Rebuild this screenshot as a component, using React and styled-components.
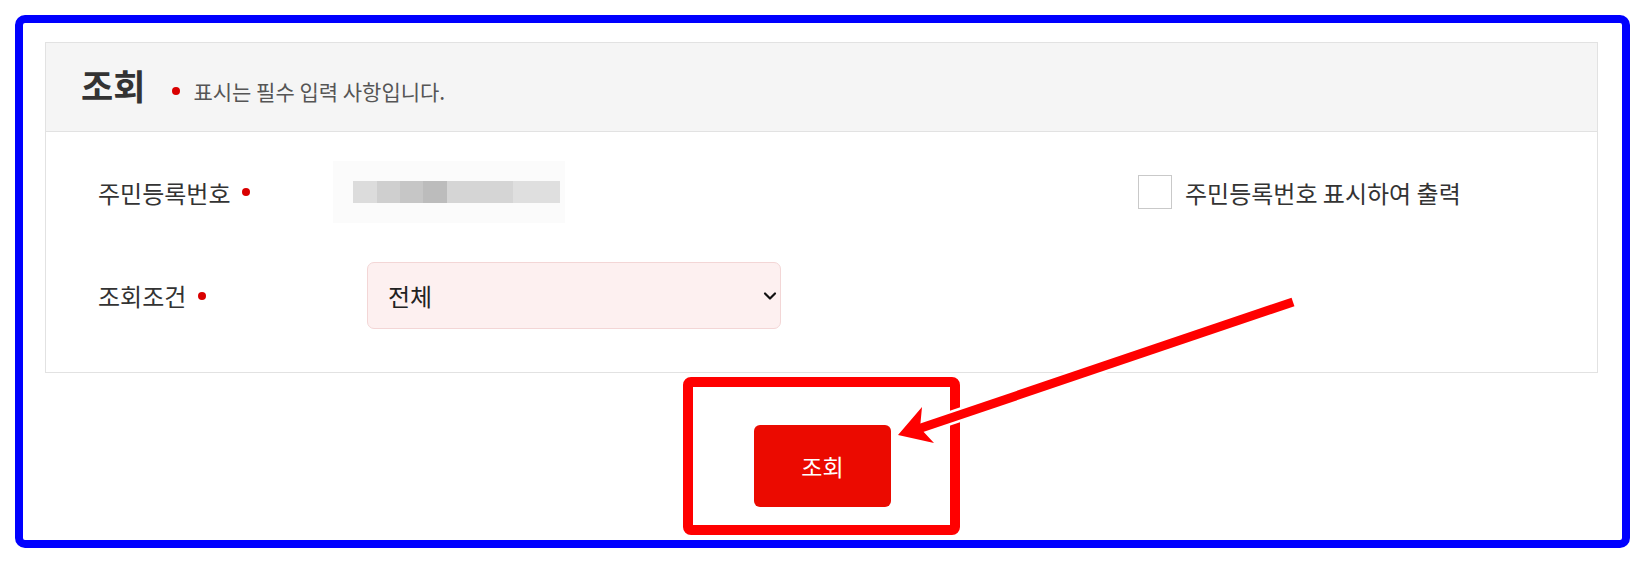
import React from "react";
import styled, { createGlobalStyle } from "styled-components";

const Global = createGlobalStyle`
  html, body { margin: 0; padding: 0; background: #ffffff; }
  body { font-family: "Noto Sans CJK KR", "Noto Sans", sans-serif; color: #333; }
  * { box-sizing: border-box; }
`;

const Page = styled.div`
  position: relative;
  width: 1645px;
  height: 564px;
  padding: 15px 0 0 15px;
  overflow: hidden;
`;

const Frame = styled.div`
  width: 1615px;
  height: 533px;
  border: 8px solid #0000ff;
  border-radius: 10px;
  padding: 19px 24px 0 22px;
  display: flex;
  flex-direction: column;
  align-items: stretch;
`;

const Panel = styled.section`
  border: 1px solid #e2e2e2;
  background: #ffffff;
`;

const Header = styled.header`
  height: 89px;
  background: #f5f5f5;
  border-bottom: 1px solid #e2e2e2;
  display: flex;
  align-items: center;
  padding: 0 0 0 35px;
`;

const Title = styled.h2`
  margin: 0 0 5px 0;
  font-size: 35px;
  font-weight: 700;
  color: #333;
  line-height: 44px;
`;

const Dot = styled.span`
  display: inline-block;
  width: 8px;
  height: 8px;
  border-radius: 50%;
  background: #d90000;
  margin-left: ${(p) => p.ml || 12}px;
  margin-right: ${(p) => p.mr || 0}px;
  flex-shrink: 0;
`;

const Note = styled.span`
  margin-top: 7px;
  font-size: 21px;
  color: #555;
  display: flex;
  align-items: center;
`;

const Body = styled.div`
  padding: 28px 0 43px 52px;
  display: flex;
  flex-direction: column;
  gap: 38px;
`;

const Row = styled.div`
  display: flex;
  align-items: center;
  height: ${(p) => p.h}px;
`;

const Label = styled.div`
  width: 235px;
  font-size: 24px;
  color: #333;
  display: flex;
  align-items: center;
  flex-shrink: 0;
`;

const Masked = styled.div`
  width: 232px;
  height: 62px;
  background: #fbfbfb;
  display: flex;
  align-items: center;
  padding-left: 20px;
`;

const Blur = styled.div`
  width: 207px;
  height: 22px;
  background: linear-gradient(
    to right,
    #dcdcdc 0 24px,
    #cfcfcf 24px 47px,
    #c6c6c6 47px 70px,
    #bcbcbc 70px 94px,
    #d5d5d5 94px 160px,
    #dfdfdf 160px 207px
  );
`;

const CheckGroup = styled.label`
  margin-left: 573px;
  display: flex;
  align-items: center;
  gap: 13px;
  font-size: 24px;
  color: #333;
  white-space: nowrap;
`;

const CheckBox = styled.span`
  width: 34px;
  height: 34px;
  border: 1px solid #c9c9c9;
  background: #fff;
  display: inline-block;
`;

const SelectWrap = styled.div`
  position: relative;
  margin-left: 34px;
  width: 414px;
  height: 67px;
`;

const Select = styled.select`
  appearance: none;
  -webkit-appearance: none;
  width: 100%;
  height: 100%;
  border: 1px solid #f3d6d6;
  background: #fdf0f0;
  border-radius: 7px;
  padding: 0 40px 0 20px;
  font-family: "Noto Sans CJK KR", "Noto Sans", sans-serif;
  font-size: 24px;
  color: #222;
  outline: none;
`;

const Chevron = styled.svg`
  position: absolute;
  right: 3px;
  top: 50%;
  transform: translateY(-50%);
  pointer-events: none;
`;

const Actions = styled.div`
  display: flex;
  justify-content: center;
  padding-top: 52px;
  margin-left: -22px;
  margin-right: -24px;
`;

const Button = styled.button`
  width: 137px;
  height: 82px;
  border: none;
  border-radius: 6px;
  background: #eb0a00;
  color: #fff;
  font-family: "Noto Sans CJK KR", "Noto Sans", sans-serif;
  font-size: 23px;
  cursor: pointer;
`;

const Annotation = styled.svg`
  position: absolute;
  left: 0;
  top: 0;
  pointer-events: none;
`;

export default function App() {
  return (
    <Page>
      <Global />
      <Frame>
        <Panel>
          <Header>
            <Title>조회</Title>
            <Note>
              <Dot ml={27} mr={13} />
              표시는 필수 입력 사항입니다.
            </Note>
          </Header>
          <Body>
            <Row h={64}>
              <Label>
                주민등록번호
                <Dot />
              </Label>
              <Masked>
                <Blur />
              </Masked>
              <CheckGroup>
                <CheckBox />
                주민등록번호 표시하여 출력
              </CheckGroup>
            </Row>
            <Row h={67}>
              <Label>
                조회조건
                <Dot />
              </Label>
              <SelectWrap>
                <Select defaultValue="all">
                  <option value="all">전체</option>
                </Select>
                <Chevron width="16" height="10" viewBox="0 0 16 10">
                  <path d="M3 2.5 L8 7.5 L13 2.5" fill="none" stroke="#111" strokeWidth="2.2" strokeLinecap="round" strokeLinejoin="round" />
                </Chevron>
              </SelectWrap>
            </Row>
          </Body>
        </Panel>
        <Actions>
          <Button>조회</Button>
        </Actions>
      </Frame>
      <Annotation width="1645" height="564" viewBox="0 0 1645 564">
        <rect x="688" y="382" width="267" height="148" rx="3" fill="none" stroke="#ff0000" strokeWidth="10" />
        <line x1="1293" y1="302" x2="918" y2="429" stroke="#ffffff" strokeWidth="14" />
        <polygon points="898,435 922,407 920,428 934,443" fill="#ffffff" stroke="#ffffff" strokeWidth="4" strokeLinejoin="round" />
        <line x1="1293" y1="302" x2="918" y2="429" stroke="#ff0000" strokeWidth="9" />
        <polygon points="898,435 922,407 920,428 934,443" fill="#ff0000" />
      </Annotation>
    </Page>
  );
}
